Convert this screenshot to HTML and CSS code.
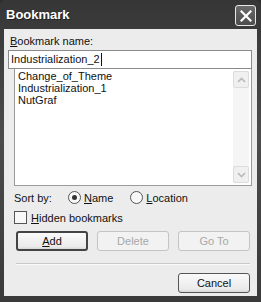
FILE: index.html
```html
<!DOCTYPE html>
<html lang="en">
<head>
  <meta charset="UTF-8" />
  <title>Bookmark</title>
  <link rel="stylesheet" href="styles.css">
</head>
<body>
  <div class="window">
    <div class="titlebar">
      <span class="title">Bookmark</span>
      <button class="close-btn" aria-label="Close">
        <svg width="12" height="12" viewBox="0 0 12 12">
          <path d="M1.5 1.5 L10.5 10.5 M10.5 1.5 L1.5 10.5" stroke="#fff" stroke-width="2.2" stroke-linecap="square" fill="none"/>
        </svg>
      </button>
    </div>

    <div class="client">
      <label class="name-label" for="bmName"><u>B</u>ookmark name:</label>
      <div class="name-input" id="bmName">Industrialization_2<span class="caret"></span></div>

      <div class="list-box">
        <ul class="list-items">
          <li>Change_of_Theme</li>
          <li>Industrialization_1</li>
          <li>NutGraf</li>
        </ul>
        <div class="scrollbar">
          <div class="scroll-btn">
            <svg width="9" height="6" viewBox="0 0 9 6"><path d="M1 5 L4.5 1.5 L8 5" stroke="#b9b9b9" stroke-width="1.6" fill="none"/></svg>
          </div>
          <div class="scroll-btn">
            <svg width="9" height="6" viewBox="0 0 9 6"><path d="M1 1 L4.5 4.5 L8 1" stroke="#b9b9b9" stroke-width="1.6" fill="none"/></svg>
          </div>
        </div>
      </div>

      <div class="sort-row">
        <span class="sort-label">Sort by:</span>
        <label class="radio"><span class="radio-dot checked"></span><u>N</u>ame</label>
        <label class="radio"><span class="radio-dot"></span><u>L</u>ocation</label>
      </div>

      <label class="check-row"><span class="check-box"></span><u>H</u>idden bookmarks</label>

      <div class="btn-row">
        <button class="btn default"><u>A</u>dd</button>
        <button class="btn disabled">Delete</button>
        <button class="btn disabled">Go To</button>
      </div>

      <div class="separator"></div>

      <div class="footer">
        <button class="btn">Cancel</button>
      </div>
    </div>
  </div>
</body>
</html>
```

FILE: styles.css
```css
body {
  margin: 0;
  background: #2e2e2e;
  font-family: 'Liberation Sans', Arial, sans-serif;
  font-size: 11px;
  color: #111;
}
.window {
  width: 261px;
  height: 302px;
  display: flex;
  flex-direction: column;
  background: linear-gradient(180deg, #363636, #4c4c4c 45%, #3a3a3a 100%);
  border-radius: 6px 6px 0 0;
  box-sizing: border-box;
}
.titlebar {
  height: 29px;
  display: flex;
  align-items: center;
  justify-content: space-between;
  padding: 0 5px 0 6px;
  flex-shrink: 0;
}
.title {
  color: #fff;
  font-weight: bold;
  font-size: 13px;
  text-shadow: 1px 1px 0 #222;
}
.close-btn {
  width: 21px;
  height: 21px;
  margin-top: 2px;
  padding: 0;
  border: 1px solid #e8e8e8;
  border-radius: 3px;
  background: linear-gradient(180deg, #6a6a6a, #4c4c4c);
  display: flex;
  align-items: center;
  justify-content: center;
}
.client {
  flex: 1;
  margin: 0 4px 6px 4px;
  background: #ececec;
  padding: 5px 5px 0 4px;
  display: flex;
  flex-direction: column;
}
.name-label {
  padding-left: 2px;
  height: 16px;
  line-height: 14px;
}
.name-input {
  height: 19px;
  line-height: 17px;
  box-sizing: border-box;
  border: 1px solid #8a8a8a;
  background: #fff;
  padding: 0 2px;
  color: #111;
  display: flex;
  align-items: center;
}
.caret {
  width: 1px;
  height: 13px;
  background: #111;
  margin-left: 1px;
}
.list-box {
  margin-left: 6px;
  height: 117px;
  box-sizing: border-box;
  border: 1px solid #9a9a9a;
  border-top: none;
  background: #fff;
  display: flex;
}
.list-items {
  flex: 1;
  list-style: none;
  margin: 0;
  padding: 1px 0 0 3px;
}
.list-items li {
  height: 12px;
  line-height: 12px;
}
.scrollbar {
  width: 16px;
  margin: 2px 2px 2px 0;
  background: #f5f5f5;
  display: flex;
  flex-direction: column;
  justify-content: space-between;
}
.scroll-btn {
  height: 15px;
  border: 1px solid #dcdcdc;
  border-radius: 2px;
  background: #f0f0f0;
  display: flex;
  align-items: center;
  justify-content: center;
}
.sort-row {
  display: flex;
  align-items: center;
  margin-top: 4px;
  padding-left: 6px;
  height: 15px;
}
.sort-label {
  width: 54px;
}
.radio {
  display: flex;
  align-items: center;
  margin-right: 17px;
}
.radio-dot {
  width: 13px;
  height: 13px;
  box-sizing: border-box;
  border: 1px solid #555;
  border-radius: 50%;
  background: #f8f8f8;
  margin-right: 3px;
  position: relative;
}
.radio-dot.checked::after {
  content: "";
  position: absolute;
  left: 3px;
  top: 3px;
  width: 5px;
  height: 5px;
  border-radius: 50%;
  background: #333;
}
.check-row {
  display: flex;
  align-items: center;
  margin-top: 5px;
  padding-left: 6px;
  height: 15px;
}
.check-box {
  width: 13px;
  height: 13px;
  box-sizing: border-box;
  border: 1px solid #555;
  background: #f8f8f8;
  margin-right: 4px;
}
.btn-row {
  display: flex;
  gap: 9px;
  margin-top: 6px;
  padding-left: 8px;
}
.btn {
  width: 72px;
  height: 20px;
  box-sizing: border-box;
  border: 1px solid #555;
  border-radius: 3px;
  background: linear-gradient(180deg, #fafafa, #eaeaea 85%, #d8d8d8);
  font: inherit;
  color: #111;
  padding: 0;
}
.btn.default {
  border: 2px solid #444;
}
.btn.disabled {
  border-color: #c4c4c4;
  color: #a8a8a8;
  background: #f2f2f2;
}
.separator {
  margin: 12px 2px 0 8px;
  height: 1px;
  background: #c8c8c8;
  border-bottom: 1px solid #fafafa;
}
.footer {
  display: flex;
  justify-content: flex-end;
  margin-top: 8px;
  padding-right: 2px;
}
```
